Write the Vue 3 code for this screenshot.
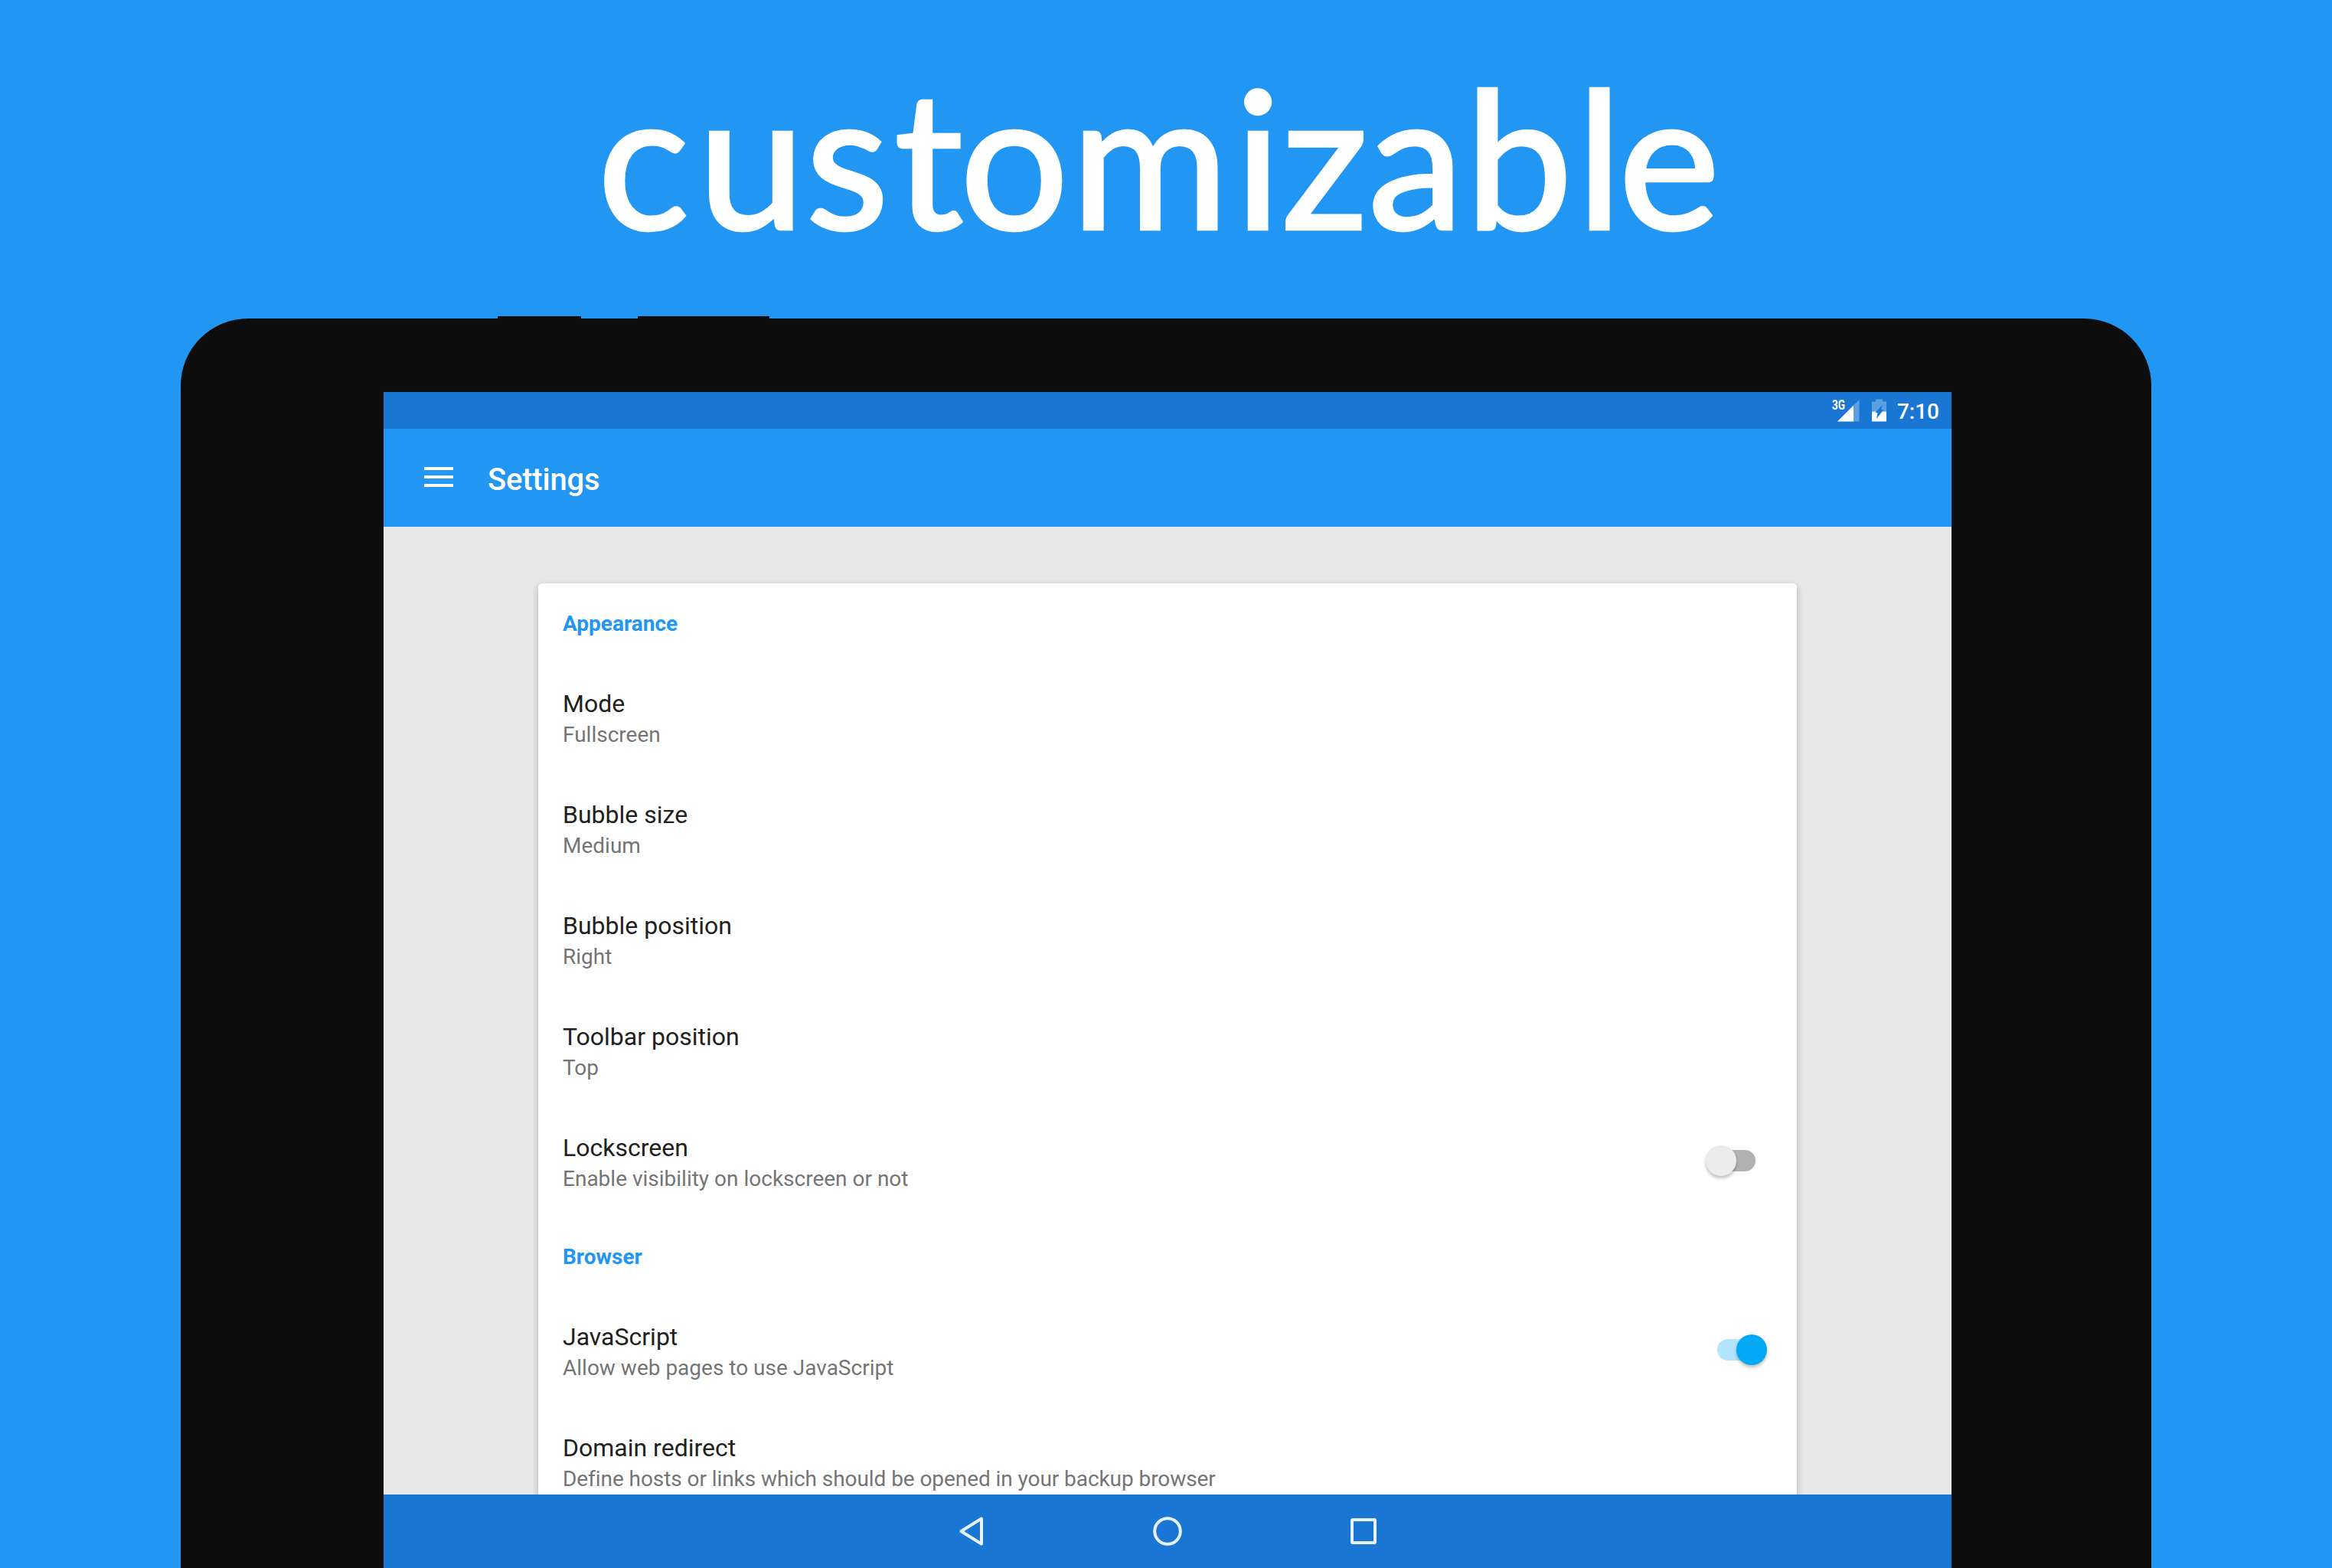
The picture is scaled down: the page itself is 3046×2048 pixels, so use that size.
<script setup>
const sections = [
  {
    title: 'Appearance',
    items: [
      { name: 'Mode', summary: 'Fullscreen' },
      { name: 'Bubble size', summary: 'Medium' },
      { name: 'Bubble position', summary: 'Right' },
      { name: 'Toolbar position', summary: 'Top' },
      { name: 'Lockscreen', summary: 'Enable visibility on lockscreen or not', toggle: 'off' },
    ],
  },
  {
    title: 'Browser',
    items: [
      { name: 'JavaScript', summary: 'Allow web pages to use JavaScript', toggle: 'on' },
      { name: 'Domain redirect', summary: 'Define hosts or links which should be opened in your backup browser' },
    ],
  },
]
</script>

<template>
  <div class="page">
    <svg class="headline" width="3046" height="413" viewBox="0 0 3046 413">
      <text x="777" y="299" dx="4 12 2 8 -3 4 9 1 1 3 6 -4">customizable</text>
    </svg>
    <div class="keys"><span class="key power"></span><span class="key volume"></span></div>
    <div class="tablet">
      <div class="screen">
        <div class="status">
          <svg class="signal" width="40" height="48" viewBox="0 0 40 48">
            <path d="M36.500 10V38.500H8z" fill="#fff" fill-opacity=".3" />
            <path d="M29 17.500V38.500H8z" fill="#fff" />
            <text x="1" y="23" textLength="17" lengthAdjust="spacingAndGlyphs" class="net">3G</text>
          </svg>
          <svg class="battery" width="19" height="30" viewBox="0 0 19 30">
            <path d="M5 .5H14V3.500H19V16.500H0V3.500H5zM13.500 8L12.500 14H15.500L13.500 16.500H5.800z" fill="#fff" fill-opacity=".3" fill-rule="evenodd" />
            <path d="M0 16.500H5.800L4.500 18H7.500L6 26L13.500 16.500H19V29.500H0z" fill="#fff" />
          </svg>
          <span class="clock">7:10</span>
        </div>
        <header class="appbar">
          <svg width="38" height="26" viewBox="0 0 38 26" fill="#fff">
            <path d="M0 0H38V4H0zM0 11H38V15H0zM0 22H38V26H0z" />
          </svg>
          <span class="title">Settings</span>
        </header>
        <main class="content">
          <div class="card">
            <section v-for="s in sections" :key="s.title">
              <h2>{{ s.title }}</h2>
              <div v-for="i in s.items" :key="i.name" class="row">
                <div>
                  <div class="name">{{ i.name }}</div>
                  <div class="summary">{{ i.summary }}</div>
                </div>
                <div v-if="i.toggle" class="switch" :class="i.toggle"><span class="thumb"></span></div>
              </div>
            </section>
          </div>
        </main>
        <nav class="navbar">
          <svg width="40" height="40" viewBox="0 0 40 40"><path d="M33 3.500V36.500L6.500 20z" /></svg>
          <svg width="40" height="40" viewBox="0 0 40 40"><circle cx="20" cy="20" r="16.800" /></svg>
          <svg width="40" height="40" viewBox="0 0 40 40"><rect x="5" y="5" width="30" height="30" rx="1" /></svg>
        </nav>
      </div>
    </div>
  </div>
</template>

<style>
body { margin: 0; background: #2196f3; }
</style>

<style scoped>
.page {
  width: 3046px;
  height: 2048px;
  overflow: hidden;
  background: #2196f3;
  font-family: Roboto, "Liberation Sans", sans-serif;
  display: flex;
  flex-direction: column;
}
.headline { display: block; flex: none; }
.headline text {
  font: 400 249px Lato, sans-serif;
  fill: #fff;
  stroke: #fff;
  stroke-width: 4.500px;
}
.keys { display: flex; height: 3px; padding-left: 650px; gap: 74px; }
.key { background: #0d0d0d; }
.power { width: 109px; }
.volume { width: 172px; }
.tablet {
  flex: 1;
  width: 2574px;
  margin-left: 236px;
  box-sizing: border-box;
  padding: 96px 261px 0 265px;
  background: #0d0d0d;
  border-radius: 88px 88px 0 0;
}
.screen { height: 1536px; display: flex; flex-direction: column; }
.status {
  height: 48px;
  background: #1976d2;
  display: flex;
  align-items: center;
  justify-content: flex-end;
  padding-right: 16px;
}
.signal { margin-right: 13px; }
.net { font: 700 18px Roboto, sans-serif; fill: #fff; }
.battery { margin-right: 14px; }
.clock { font-size: 28px; font-weight: 500; line-height: 48px; color: #fff; padding-top: 3px; }
.appbar {
  height: 128px;
  background: #2196f3;
  display: flex;
  align-items: flex-start;
  padding-left: 53px;
}
.appbar svg { margin-top: 50px; }
.title { margin: 43px 0 0 45px; font-size: 40px; font-weight: 500; line-height: 48px; letter-spacing: -.2px; color: #fff; }
.content { flex: 1; min-height: 0; overflow: hidden; background: #e8e8e8; padding: 74px 202px 0; }
.card {
  height: 1400px;
  background: #fff;
  border-radius: 5px;
  box-sizing: border-box;
  padding: 0 39px 0 32px;
  box-shadow: 0 3px 8px rgba(0, 0, 0, .25);
}
h2 { margin: 0; height: 102px; padding-top: 36px; box-sizing: border-box; font-size: 28px; font-weight: 700; line-height: 33px; color: #2196f3; }
.row { height: 145px; display: flex; justify-content: space-between; box-sizing: border-box; padding-top: 35px; }
.name { font-size: 32px; line-height: 40px; color: #212121; }
.summary { font-size: 28px; line-height: 40px; margin-top: 1px; color: #757575; }
section:last-child .row:last-child .summary { letter-spacing: -.07px; }
.switch { position: relative; width: 50px; height: 28px; margin: 23px 15px 0 0; border-radius: 14px; background: #b2b2b2; }
.thumb { position: absolute; top: -6px; left: -15px; width: 40px; height: 40px; border-radius: 50%; background: #ececec; box-shadow: 0 3px 4px rgba(0, 0, 0, .25); }
.on { background: #b3e5fc; }
.on .thumb { left: 25px; background: #03a9f4; }
.navbar {
  height: 96px;
  background: #1976d2;
  display: flex;
  justify-content: center;
  align-items: center;
  gap: 216px;
}
.navbar svg { fill: none; stroke: #e8f1fa; stroke-width: 4; stroke-linejoin: round; }
</style>
